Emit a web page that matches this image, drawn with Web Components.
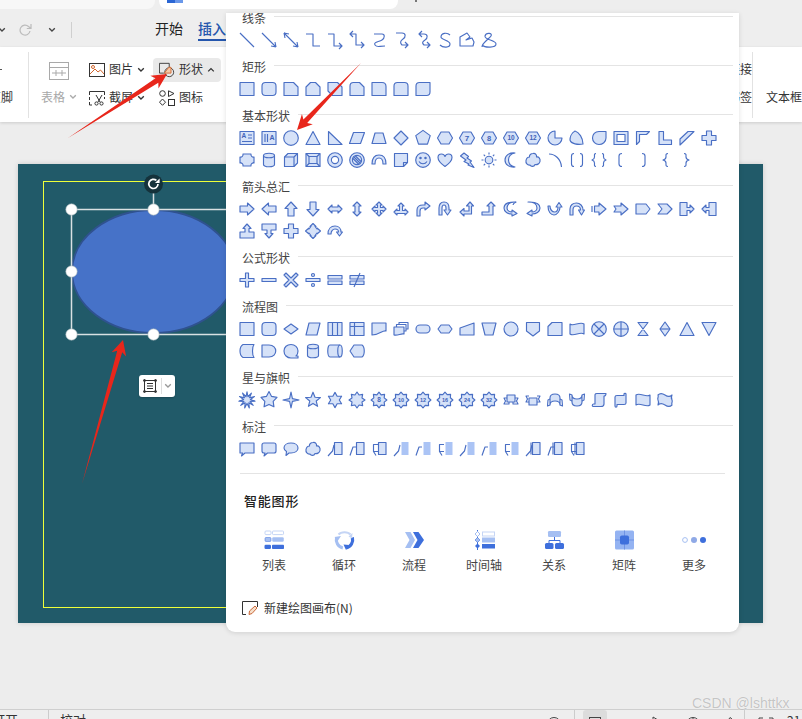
<!DOCTYPE html>
<html lang="zh"><head><meta charset="utf-8"><title>形状</title>
<style>html,body{margin:0;padding:0;background:#ededed;font-family:"Noto Sans CJK SC","Noto Sans",sans-serif;}</style>
</head><body><wps-app></wps-app>
<script>
const FONT='"Noto Sans CJK SC","Noto Sans",sans-serif';
const P=d=>`<path d="${d}"/>`, N=d=>`<path fill="none" d="${d}"/>`;
const pts=a=>a.map(p=>p[0].toFixed(2)+','+p[1].toFixed(2)).join(' ');
const poly=(n,r,rot=-90)=>`<polygon points="${pts([...Array(n)].map((_,i)=>{const t=(rot+i*360/n)*Math.PI/180;return[8+r*Math.cos(t),8+r*Math.sin(t)]}))}"/>`;
const star=(n,R,r)=>`<polygon points="${pts([...Array(2*n)].map((_,i)=>{const t=(-90+i*180/n)*Math.PI/180,q=i%2?r:R;return[8+q*Math.cos(t),8+q*Math.sin(t)]}))}"/>`;
const lab=(t,s=6.5)=>`<text x="8" y="${8+s*.36}" font-size="${s}" font-weight="700" text-anchor="middle" fill="#3f63b8" stroke="none" font-family="Liberation Sans">${t}</text>`;
const rot=(f,a)=>`<g transform="rotate(${a} 8 8)">${f}</g>`;
const flip=f=>`<g transform="translate(16 0) scale(-1 1)">${f}</g>`;
const C=(r=7)=>`<circle cx="8" cy="8" r="${r}"/>`;
const R=`<rect x="1" y="1.5" width="14" height="13"/>`;
const hex=`<polygon points="4,2 12,2 15.5,8 12,14 4,14 .5,8"/>`;
const aR=P('M1 5H8.5V2L15 8 8.5 14V11H1Z');
const cloud=P('M8 1.5C10.5 1 12 3 11.5 5 14 4.5 15.5 7 15 9.5 14.5 12 12 13 10 12.5 9 15 6 15 5 13 2.5 13.5 .5 11 1 8.5 1.5 6 3 5 4.5 5 4 3 6 1.5 8 1.5Z');
const can=P('M2.5 3.5C2.5 .5 13.5 .5 13.5 3.5V12.5C13.5 15.5 2.5 15.5 2.5 12.5Z')+N('M2.5 3.5C2.5 6.5 13.5 6.5 13.5 3.5');
const box=`<rect x="7.5" y="1.5" width="7.5" height="12"/>`;
const fbox=`<rect x="8.5" y="1" width="7" height="13" fill="#abc4f5" stroke="none"/>`;
const tl1=N('M7 4L5.5 10 1 15'),tl2=N('M7 6H4L1 14.5'),tl3=N('M7 10.5H2.5V3.5H7M2.5 10.5L5 14.5');
const SETS={
lines:[N('M1 1L15 15'),N('M1 1L15 15M15 15L10 14M15 15L14 10'),N('M1 1L15 15M15 15L10 14M15 15L14 10M1 1L6 2M1 1L2 6'),N('M1 2H8V14H15'),N('M1 2H7V14H15M12 11L15 14 12 17'),N('M1 2H7V13H15M4 -1L1 2 4 5M12 10L15 13 12 16'),N('M3 2H11C14 2 14 6 11 8S2 10 4 13 8 14 14 14'),N('M3 1H9C13 1 13 5 10 7S7 11 9 13H15M12 10L15 13 12 16'),N('M4 2H9C13 2 13 6 10 8S7 11 9 13H15M7-1L4 2 7 5M12 10L15 13 12 16'),N('M13 3C10 0 4 1 4 5 4 8 13 8 13 12 13 16 6 16 3 13'),N('M1 14V5L8 1 11 5 7 8 13 6 15 10 14 14Z'),N('M1 15C1 11 8 7 10 4 12 1 5 0 4 4 3 8 15 8 15 12 15 16 4 16 1 13')],
rects:[R,`<rect x="1" y="1.5" width="14" height="13" rx="3.5"/>`,P('M1 1.5H10.5L15 6V14.5H1Z'),P('M5.5 1.5H10.5L15 6V14.5H1V6Z'),P('M1 1.5H10.5L15 6V14.5H5.5L1 10Z'),P('M1 14.5V5Q1 1.5 4.5 1.5H10.5L15 6V14.5Z'),P('M1 1.5H11Q15 1.5 15 5.5V14.5H1Z'),P('M1 14.5V5Q1 1.5 4.5 1.5H11.5Q15 1.5 15 5V14.5Z'),P('M4.5 1.5H15V11Q15 14.5 11.5 14.5H1V5Q1 1.5 4.5 1.5Z')],
basic1:[R+`<text x="4.8" y="8.4" font-size="6.5" font-weight="700" text-anchor="middle" fill="#3f63b8" stroke="none" font-family="Liberation Sans">A</text>`+N('M9 5H13M9 8H13M3 11.5H13'),R+N('M4 4V12M6.5 4V12')+`<text x="11" y="10" font-size="7" font-weight="700" text-anchor="middle" fill="#3f63b8" stroke="none" font-family="Liberation Sans">A</text>`,C(7.3),P('M8 1.5L15 14.5H1Z'),P('M1.5 1.5L15 14.5H1.5Z'),P('M4.5 2.5H15.5L11.5 13.5H.5Z'),P('M4 3H12L15 13.5H1Z'),P('M8 1L15 8 8 15 1 8Z'),poly(5,7.6),hex,hex+lab('7',8),hex+lab('8',7.5),hex+lab('10',6.5),hex+lab('12',6.5),P('M8 8H15A7 7 0 1 1 8 1Z'),P('M6 1C2 3 1 8 1 10 2 14 9 15 14 14 14 8 10 2 6 1Z'),P('M15 1.5H8C4 1.5 1.5 4.5 1.5 8S4.5 14.5 8 14.5 15 12 15 8Z'),R+`<rect x="4" y="4.5" width="8" height="7" fill="#fff"/>`,P('M1.5 1.5H14.5L11.5 4.5H4.5V11.5L1.5 14.5Z'),P('M2 1.5H6.5V10H14.5V14.5H2Z'),P('M1 9L9 1.5H15L1 15Z'),P('M5.5 1H10.5V5.5H15V10.5H10.5V15H5.5V10.5H1V5.5H5.5Z')],
basic2:[P('M4 2H12A2.5 2.5 0 0 0 15 5V11A2.5 2.5 0 0 0 12 14H4A2.5 2.5 0 0 0 1 11V5A2.5 2.5 0 0 0 4 2Z'),can,P('M1.5 5L5 1.5H14.5V11L11 14.5H1.5Z')+N('M1.5 5H11V14.5M11 5L14.5 1.5'),R+`<rect x="4" y="4.5" width="8" height="7"/>`+N('M1 1.5L4 4.5M15 1.5L12 4.5M1 14.5L4 11.5M15 14.5L12 11.5'),C(7.3)+`<circle cx="8" cy="8" r="3.6" fill="#fff"/>`,C(7.3)+C(4.6)+N('M4.5 4.5L11.5 11.5M6 3.5L12.5 10M3.5 6L10 12.5'),P('M1 12C1 6 4 3 8 3S15 6 15 12H12C12 8 10.5 6 8 6S4 8 4 12Z'),P('M1.5 1.5H14.5V10.5L10.5 14.5H1.5Z')+N('M10.5 14.5V10.5H14.5'),C(7.3)+N('M4 9.5C6 12.5 10 12.5 12 9.5')+`<circle cx="5.5" cy="6" r=".7"/><circle cx="10.5" cy="6" r=".7"/>`,P('M8 14.5C3 11 1 8 1 5.5 1 3 3 2 4.5 2 6 2 7.5 3 8 4.5 8.5 3 10 2 11.5 2 13 2 15 3 15 5.5 15 8 13 11 8 14.5Z'),P('M5 1L1.5 4 7 8 5 9.5 10 12 9 13 15 15.5 11 10 12.5 9 8 6 9.5 4.5Z'),C(3.8)+N('M8 .5V2.5M8 13.5V15.5M.5 8H2.5M13.5 8H15.5M2.7 2.7L4.1 4.1M11.9 11.9L13.3 13.3M2.7 13.3L4.1 11.9M11.9 4.1L13.3 2.7'),P('M12 1C7 2 5.5 5 5.5 8S7 14 12 15C6 15.5 2 12.5 2 8S6 .5 12 1Z'),cloud,N('M2 2C8 2 14 7 14.5 15'),N('M5 1.5C3 1.5 2.5 2.5 2.5 4V12C2.5 13.5 3 14.5 5 14.5M11 1.5C13 1.5 13.5 2.5 13.5 4V12C13.5 13.5 13 14.5 11 14.5'),N('M5 1.5C3 1.5 3.5 3 3.5 5 3.5 7 2.5 7.5 1 8 2.5 8.5 3.5 9 3.5 11 3.5 13 3 14.5 5 14.5M11 1.5C13 1.5 12.5 3 12.5 5 12.5 7 13.5 7.5 15 8 13.5 8.5 12.5 9 12.5 11 12.5 13 13 14.5 11 14.5'),N('M9 1.5C6.5 1.5 6 2.5 6 4V12C6 13.5 6.5 14.5 9 14.5'),N('M7 1.5C9.5 1.5 10 2.5 10 4V12C10 13.5 9.5 14.5 7 14.5'),N('M11 1.5C8.5 1.5 9 3 9 5 9 7 8 7.5 6 8 8 8.5 9 9 9 11 9 13 8.5 14.5 11 14.5'),N('M5 1.5C7.5 1.5 7 3 7 5 7 7 8 7.5 10 8 8 8.5 7 9 7 11 7 13 7.5 14.5 5 14.5')],
arrows1:[aR,flip(aR),rot(aR,-90),rot(aR,90),P('M1 8L5 4V6H11V4L15 8 11 12V10H5V12Z'),rot(P('M1 8L5 4V6H11V4L15 8 11 12V10H5V12Z'),90),P('M8 1L11 4H9.5V6.5H12V5L15 8 12 11V9.5H9.5V12H11L8 15 5 12H6.5V9.5H4V11L1 8 4 5V6.5H6.5V4H5Z'),P('M8 2L11 5H9.5V9.5H12V8L15 11 12 14V12.5H4V14L1 11 4 8V9.5H6.5V5H5Z'),P('M2 15V9C2 5 5 4 8 4H10V1L15 5 10 9V7H8C6 7 5 8 5 10V15Z'),P('M2 14V7C2 3 4 1 7 1S12 3 12 7V9H14L10.5 14 7 9H9V7C9 5 8.5 4 7 4S5 5 5 7V14Z'),P('M1 11L5 7.5V10H10V5H7.5L11 1 14.5 5H12.5V13H5V15Z'),P('M1 11H8V5H6L10 1 14 5H12V14H1Z'),P('M13 1C8 1 4 3 4 7C4 10 7 11 9 11V9L14 12.5 9 15V13C5 13 1 11 1 7C1 3 5 1 11 1Z')+N('M13 1C11 2 10 3 10 4'),flip(P('M13 1C8 1 4 3 4 7C4 10 7 11 9 11V9L14 12.5 9 15V13C5 13 1 11 1 7C1 3 5 1 11 1Z')),P('M1 5C1 11 4 14 7 14S13 10 13 6H15L12 1.5 9 6H11C11 9 9.5 11 7.5 11S3 9 3 5Z'),P('M1 14V8C1 4 4 2 7.5 2S14 5 14 9H15.5L12.5 14 9.5 9H11.5C11.5 6.5 10 5 7.5 5S4 7 4 9V14Z'),N('M1 5V11')+P('M3.5 5H8V2L15 8 8 14V11H3.5Z'),P('M1 5H8V2L15 8 8 14V11H1L3 8Z'),P('M1 3H11L15 8 11 13H1Z'),P('M1 3H10L15 8 10 13H1L5 8Z'),P('M1 1.5H8V6.5H11V4L15 8 11 12V9.5H8V14.5H1Z'),flip(P('M1 1.5H8V6.5H11V4L15 8 11 12V9.5H8V14.5H1Z'))],
arrows2:[P('M1 15V9H6V5.5H4L8 1 12 5.5H10V9H15V15Z'),P('M1 1H15V7H10V10.5H12L8 15 4 10.5H6V7H1Z'),P('M5.5 1H10.5V5.5H15V10.5H10.5V15H5.5V10.5H1V5.5H5.5Z'),P('M8 .5L11 3.5H10L12 6V5L15.5 8 12 11V10L10 12.5H11L8 15.5 5 12.5H6L4 10V11L.5 8 4 5V6L6 3.5H5Z'),P('M1 11C1 6 4 3 8 3S14 6 14 9H15.5L12.5 13 9.5 9H11.5C11.5 7 10 6 8 6S4 8 4 11Z')],
eq:[P('M6.5 1H9.5V6.5H15V9.5H9.5V15H6.5V9.5H1V6.5H6.5Z'),P('M1 6.5H15V9.5H1Z'),P('M3 1L8 6 13 1 15 3 10 8 15 13 13 15 8 10 3 15 1 13 6 8 1 3Z'),P('M1 6.5H15V9.5H1Z')+`<circle cx="8" cy="3" r="1.5"/><circle cx="8" cy="13" r="1.5"/>`,P('M1 3.5H15V7H1ZM1 9H15V12.5H1Z'),P('M1 3.5H15V7H1ZM1 9H15V12.5H1Z')+N('M11 1L5 15')],
flow1:[R,`<rect x="1" y="1.5" width="14" height="13" rx="3.5"/>`,P('M1 8L8 3 15 8 8 13Z'),P('M4 2H15L12 14H1Z'),R+N('M5.5 1.5V14.5M10.5 1.5V14.5'),R+N('M1 5.5H15M5.5 1.5V14.5'),P('M1 2H15V10C11 9 9 14 1 14Z'),P('M1 6H11V13C8 12 5 15 1 14Z')+N('M3.5 6V3.5H13V10H11M6 3.5V1.5H15V8H13'),`<rect x="1" y="4" width="14" height="8" rx="4"/>`,P('M4 4H12L15 8 12 12H4L1 8Z'),P('M1 7L15 2V14H1Z'),P('M1 2H15L12 14H4Z'),C(7),P('M1.5 1.5H14.5V10L8 15 1.5 10Z'),P('M5 1.5H15V14.5H1V5.5Z'),P('M1 3C4 6 11 0 15 3V13C11 10 5 16 1 13Z'),C(7.3)+N('M3 3L13 13M13 3L3 13'),C(7.3)+N('M8 .7V15.3M.7 8H15.3'),P('M3 1.5H13L3 14.5H13Z'),P('M8 1L13 8 8 15 3 8Z')+N('M3 8H13'),P('M8 1.5L15 14.5H1Z'),P('M1 1.5H15L8 14.5Z')],
flow2:[P('M4 1.5H15C13 4 13 12 15 14.5H4C0 12 0 4 4 1.5Z'),P('M1 2H8C17 2 17 14 8 14H1Z'),P('M8 1.5C12 1.5 15 4.5 15 8 15 10 14 12 13 13H15V15H8C4 15 1 12 1 8S4 1.5 8 1.5Z'),can,P('M3 2H13C16 2 16 14 13 14H3C0 14 0 2 3 2Z')+N('M13 2C10 2 10 14 13 14'),P('M5 2H13C16 4 16 12 13 14H5L1 8Z')],
stars:[star(11,8.2,3.4),star(5,8.4,4.4),star(4,8,2),star(5,7.8,3.4),star(6,7.6,4.3),star(8,8,5.4),star(8,7.9,5.6)+lab('8',6.5),star(8,7.9,5.8)+lab('10',5.5),star(8,7.9,5.8)+lab('12',5.5),star(8,7.9,5.8)+lab('16',5.5),star(8,7.9,5.8)+lab('24',5.5),star(8,7.9,5.8)+lab('32',5.5),P('M4 3H12V10H4Z')+N('M4 6H1L2.5 9 1 12H6V10M12 6H15L13.5 9 15 12H10V10'),P('M4 6H12V13H4Z')+N('M4 4H1L2.5 7 1 10H4M12 4H15L13.5 7 15 10H12'),P('M3 13V6C3 3 5 2 8 2S13 3 13 6V13C13 10 11 9 8 9S3 10 3 13Z')+N('M3 7L1 8 .5 14 3 13M13 7L15 8 15.5 14 13 13'),P('M3 3V10C3 13 5 14 8 14S13 13 13 10V3C13 6 11 7 8 7S3 6 3 3Z')+N('M3 9L1 8 .5 2 3 3M13 9L15 8 15.5 2 13 3'),P('M4 3C4 1.5 5 1.5 6 1.5H15C15 3 14 4 13 4V12C13 14 12 14.5 10 14.5H2C1 14.5 1 12 2.5 12H4Z'),P('M2 5C2 3.5 3 3.5 4 3.5H11V2C11 1 13 1 13 2V11C13 12 12 12.5 11 12.5H4V14C4 15.5 2 15.5 2 14Z'),P('M1 3C5 0 11 6 15 3V13C11 16 5 10 1 13Z'),P('M1 3C3 1 5 1 8 3S13 5 15 3C14 5 14 6 15 8S14 11 15 13C13 15 11 15 8 13S3 11 1 13C2 11 2 10 1 8S2 5 1 3Z')],
call:[P('M1 2H15V12H6L2.5 15 3.5 12H1Z'),P('M3 2H13Q15 2 15 4V10Q15 12 13 12H6.5L3 15 4 12H3Q1 12 1 10V4Q1 2 3 2Z'),P('M8 2C12 2 15 4 15 7S12 12 8 12H6L3 14.5 3.5 10.5C2 9.5 1 8.5 1 7 1 4 4 2 8 2Z'),cloud,box+tl1,box+tl2,box+tl3,fbox+tl1,fbox+tl2,fbox+tl3,fbox+tl1,fbox+tl2,fbox+tl3,box+tl1+N('M6 1.5V13.5'),box+tl2+N('M6 1.5V13.5'),box+tl3+N('M6 1.5V13.5')]
};
const DARK='#3e6fdc',MID='#a5bff2',LITE='#c5d5f5';
const SMART={
list:`<rect x="1" y="1" width="6" height="3.6" rx="1" fill="#fff" stroke="${LITE}"/><rect x="8.5" y="1" width="11" height="3.6" rx=".8" fill="#fff" stroke="${LITE}"/><rect x="1" y="7.5" width="6" height="4" rx="1" fill="${MID}" stroke="${DARK}" stroke-width=".5"/><rect x="8.5" y="7.5" width="11" height="4" rx=".8" fill="${MID}" stroke="${MID}" stroke-width=".5"/><rect x=".5" y="14.8" width="6.5" height="4.2" rx="1.2" fill="${DARK}"/><rect x="8" y="14.8" width="12" height="4.2" rx=".8" fill="${DARK}"/>`,
cycle:`<path fill="none" stroke="${LITE}" stroke-width="2" d="M4.5 4.5C7 1.5 14 1.5 16.5 4.5"/><path fill="none" stroke="${MID}" stroke-width="3.2" d="M2.6 7.5C1.5 12 4 17 8.8 18"/><path fill="none" stroke="${DARK}" stroke-width="3.2" d="M18.4 7.5C19.5 12 17 17 12.2 18"/><path fill="${LITE}" d="M14.5 6.5L18.5 3 18 8.5Z"/><path fill="${MID}" d="M.5 7L7 6 4 10.5Z"/><path fill="${DARK}" d="M15 15L12 20 9.5 14.5Z"/>`,
flow:`<path fill="${MID}" d="M1 2H6.5L11 10 6.5 18H1L5.5 10Z"/><path fill="${DARK}" d="M9 2H14.5L20 10 14.5 18H9L13.5 10Z"/>`,
time:`<path stroke="${DARK}" fill="none" d="M3.5 0V20"/><path fill="#fff" stroke="${MID}" d="M3.5 1.5L6 4 3.5 6.5 1 4Z"/><path fill="${MID}" stroke="${DARK}" stroke-width=".6" d="M3.5 7.5L6 10 3.5 12.5 1 10Z"/><path fill="${DARK}" d="M3.5 13.5L6 16 3.5 18.5 1 16Z"/><rect x="8.5" y="2" width="12" height="4" fill="#fff" stroke="${LITE}"/><rect x="8.5" y="8" width="12" height="4" fill="${MID}" stroke="${MID}"/><rect x="8" y="14" width="13" height="4.5" fill="${DARK}"/>`,
rel:`<rect x="4" y="1" width="13" height="6" rx="1.2" fill="${MID}"/><path fill="none" stroke="${DARK}" d="M10.5 7V10.5M5 13V10.5H16V13"/><rect x="1" y="13" width="8.5" height="6" rx="1.5" fill="${DARK}"/><rect x="11" y="13" width="9" height="6" rx="1.5" fill="${DARK}"/>`,
matrix:`<rect x="1" y="0.5" width="19" height="19" rx="1.5" fill="#94b3f2"/><path fill="none" stroke="#6f93e4" d="M10.5 0.5V19.5M1 10H20"/><rect x="6" y="5.5" width="9" height="9" rx="1.8" fill="${DARK}"/>`,
more:`<circle cx="3" cy="10" r="2.4" fill="#fff" stroke="${MID}"/><circle cx="12" cy="10" r="3" fill="#8fa9e6"/><circle cx="21" cy="10" r="3" fill="${DARK}"/>`
};
const RIB={
table:`<svg width="20" height="18" viewBox="0 0 20 18" fill="none" stroke="#a9a9a9" style="margin-top:4px"><rect x=".5" y=".5" width="19" height="17"/><path d="M.5 5.5H19.5M3 11H17M7 8V14M13 8V14"/></svg>`,
pic:`<svg width="16" height="14" viewBox="0 0 16 14" fill="none" stroke="#333"><rect x=".5" y=".5" width="15" height="13"/><circle cx="4" cy="4" r="1.5" stroke="#d2662e"/><path stroke="#d2662e" d="M1 11L6 6 9 9 11.5 7 15 11"/></svg>`,
shape:`<svg width="18" height="16" viewBox="0 0 18 16" fill="none" stroke="#333"><path d="M5.5 11.5H.5V.5H11.5V5"/><circle cx="11.5" cy="10.5" r="5"/><path fill="#f3c9a8" stroke="#d2662e" d="M6 11.5L11 5H13.5V11.5Z"/></svg>`,
shot:`<svg width="16" height="15" viewBox="0 0 16 15" fill="none" stroke="#333"><path d="M.5 4V.5H15.5V4M.5 6V9M.5 11V14H3M15.5 6V8"/><path d="M7 4L11 11M13 4L9 11"/><circle cx="7.5" cy="12.5" r="1.6"/><circle cx="12.5" cy="12.5" r="1.6"/></svg>`,
icons:`<svg width="16" height="16" viewBox="0 0 16 16" fill="none" stroke="#333"><circle cx="3.5" cy="3.5" r="2.8"/><path d="M9.5 .8L15 3.5 9.5 6.5Z"/><path d="M3.5 9L6.5 12.2 3.5 15.3 .5 12.2Z"/><rect x="9.5" y="9.5" width="6" height="6"/></svg>`
};
const chev=(c='#333')=>`<svg width="8" height="6" viewBox="0 0 8 6" fill="none" stroke="${c}" stroke-width="1.3"><path d="M1.2 1.2L4 4 6.8 1.2"/></svg>`;
const chevUp=`<svg width="8" height="6" viewBox="0 0 8 6" fill="none" stroke="#333" stroke-width="1.3"><path d="M1.2 4.4L4 1.6 6.8 4.4"/></svg>`;

function def(name,html,init){customElements.define(name,class extends HTMLElement{
  constructor(){super();this.attachShadow({mode:'open'});}
  connectedCallback(){if(this._d)return;this._d=1;this.shadowRoot.innerHTML=typeof html==='function'?html(this):html;init&&init(this);}
});}

def('title-bar',`<style>:host{display:flex;height:13px;background:#eeeeee;align-items:flex-start;position:relative}
.card{width:155px;height:9px;background:#f7f7f7;border-bottom-right-radius:8px}
.tab{width:239px;height:9px;margin-left:4px;background:#fff;border-radius:0 0 8px 8px;display:flex}
.tab i{display:block;width:16px;height:3px;margin-left:8px;background:linear-gradient(90deg,#2a66d4 50%,#6a98ea 50%)}
.dot{width:2px;height:2px;margin-left:17px;background:#777}</style>
<div class="card"></div><div class="tab"><i></i></div><div class="dot"></div>`);

def('menu-bar',`<style>:host{display:flex;height:34px;background:#eeeeee;align-items:center;font:14px ${FONT};color:#222;box-sizing:border-box}
.c{display:flex;align-items:center}
.div{width:1px;height:16px;background:#cfcfcf;margin-left:15px}
.tab{line-height:31px;height:34px;position:relative}
.on{color:#2456ad;font-weight:500;margin-left:15px}
.on::after{content:"";position:absolute;left:0;right:0;bottom:6px;height:2px;background:#2456ad}
.first{margin-left:83px}</style>
<span class="c" style="margin-left:-2px">${chev('#444')}</span>
<svg style="margin-left:13px" width="14" height="14" viewBox="0 0 14 14" fill="none" stroke="#bbb" stroke-width="1.2"><path d="M12 8A5 5 0 1 1 10.5 3.5L13 5.5M13 1V5.5H8.8" transform="translate(-1 0)"/></svg>
<span class="c" style="margin-left:15px">${chev('#444')}</span>
<div class="div"></div>
<span class="tab first">开始</span><span class="tab on">插入</span>`);

def('rib-btn',h=>{const a=k=>h.getAttribute(k);return `<style>:host{display:flex;align-items:center;height:24px;box-sizing:border-box;padding:0 4px;gap:4px;white-space:nowrap;border-radius:4px;font:12px ${FONT};color:#333}
:host([active]){background:#e9e9e9;padding:0 6px;width:68px}
.i{display:flex;width:16px;height:16px;align-items:center;justify-content:center}
.t{line-height:22px;height:24px}
.c{display:flex;width:8px;justify-content:center}</style>
<span class="i">${RIB[a('icon')]||''}</span><span class="t"><slot></slot></span><span class="c">${a('caret')==='up'?chevUp:a('caret')==='down'?chev():''}</span>`});

def('rib-bar',`<style>:host{display:flex;height:75px;background:#fff;box-sizing:border-box;padding-top:5px;font:12px ${FONT};color:#333;box-shadow:0 1px 3px rgba(0,0,0,.14);position:relative;white-space:nowrap}
.g{height:66px;box-sizing:border-box;padding-top:6px}
.rows{display:flex;flex-direction:column;gap:4px}
.row{height:24px;display:flex;align-items:flex-start;line-height:22px}
.row svg{flex:none}
.clip{width:29px;border-right:1px solid #e2e2e2;box-sizing:border-box;padding-right:15px;align-items:flex-end}
.clip .row{justify-content:flex-end}
.clip i{display:block;width:2px;height:1px;background:#555;margin:11px 11px 0 0}
.tb{width:36px;margin-left:12px;align-items:center;color:#a8a8a8}
.tb .row{gap:4px}
.tb .row:last-child svg{margin-top:8px}
.c2{margin-left:8px;width:64px;margin-right:4px}
.c3{width:68px}
.link{margin-left:507px;width:50px;border-right:1px solid #e2e2e2}
.txt{margin-left:13px}</style>
<div class="g rows clip"><div class="row"><i></i></div><div class="row">页脚</div></div>
<div class="g rows tb"><div class="row">${RIB.table}</div><div class="row">表格${chev('#aaa')}</div></div>
<div class="g rows c2"><rib-btn icon="pic" caret="down">图片</rib-btn><rib-btn icon="shot" caret="down">截屏</rib-btn></div>
<div class="g rows c3"><rib-btn icon="shape" caret="up" active>形状</rib-btn><rib-btn icon="icons" style="padding-left:6px">图标</rib-btn></div>
<div class="g rows link"><div class="row" style="margin-left:-12px">超链接</div><div class="row">书签</div></div>
<div class="g rows txt"><div class="row"></div><div class="row">文本框</div></div>`);

def('slide-canvas',`<style>:host{display:block;position:relative;width:745px;height:459px;background:#215a69;box-shadow:0 0 5px rgba(0,0,0,.15)}
.art{position:absolute;left:0;top:0}
.float{position:absolute;left:121px;top:211px;width:36px;height:22px;background:#fff;border-radius:3px;display:flex;align-items:center;box-shadow:0 1px 2px rgba(0,0,0,.2)}
.float span{display:flex;margin-left:3px;padding-left:2px;border-left:1px solid #ddd;height:16px;align-items:center}</style>
<svg class="art" width="745" height="459" viewBox="0 0 745 459">
<rect x="25.5" y="17.5" width="690" height="426" fill="none" stroke="#efff3a"/>
<path stroke="#d9e1e3" stroke-width="1.5" d="M135.5 21V46"/>
<ellipse cx="135.5" cy="107.5" rx="81.5" ry="61.5" fill="#4672c8" stroke="#2f528f" stroke-width="2"/>
<rect x="53.5" y="45.5" width="165" height="125" fill="none" stroke="#d9e1e3" stroke-width="1.5"/>
<g fill="#fff" stroke="#9fb0b5" stroke-width=".6"><circle cx="53.5" cy="45.5" r="5.7"/><circle cx="135.5" cy="45.5" r="5.7"/><circle cx="53.5" cy="107.5" r="5.7"/><circle cx="53.5" cy="170.5" r="5.7"/><circle cx="135.5" cy="170.5" r="5.7"/></g>
<circle cx="135.5" cy="20" r="9.5" fill="#15323b"/>
<path fill="none" stroke="#fff" stroke-width="1.7" d="M140 20A4.6 4.6 0 1 1 138.4 16.4"/><path fill="#fff" d="M141.6 14.5V19H137Z"/>
</svg>
<div class="float"><svg style="margin-left:3px;flex:none" width="16" height="16" viewBox="0 0 16 16" fill="none" stroke="#333"><rect x="2.5" y="2.5" width="11" height="11"/><path d="M5 5.5H11M5 8H11M5 10.5H11"/><g fill="#333"><circle cx="2.5" cy="2.5" r="1"/><circle cx="13.5" cy="2.5" r="1"/><circle cx="2.5" cy="13.5" r="1"/><circle cx="13.5" cy="13.5" r="1"/></g></svg><span>${chev('#999')}</span></div>`);

def('work-space',`<style>:host{display:block;height:587px;background:#ededed;padding:42px 0 0 18px;box-sizing:border-box}</style><slide-canvas></slide-canvas>`);

def('status-bar',`<style>:host{display:flex;overflow:hidden;background:#eeeeee;border-top:1px solid #cfcfcf;font:13px ${FONT};color:#333;box-sizing:border-box;height:10px;white-space:nowrap}
.in{display:flex;align-items:flex-start;width:100%;height:22px}
.t{line-height:20px}
.sep{width:1px;height:22px;background:#ccc;flex:none}
svg{flex:none;margin-top:6px}
.on{background:#dcdcdc;width:24px;height:22px;display:flex;justify-content:center;border-radius:3px;flex:none}</style>
<div class="in"><span class="t" style="margin-left:-8px">打开</span><span class="sep" style="margin-left:30px"></span><span class="t" style="margin-left:11px">校对</span>
<svg style="margin-left:461px" width="14" height="16" fill="none" stroke="#444"><circle cx="7" cy="8" r="6.5"/></svg>
<span class="sep" style="margin-left:13px"></span>
<span class="on" style="margin-left:8px"><svg width="12" height="16" fill="none" stroke="#444"><rect x=".5" y="1.5" width="11" height="12"/><path d="M3 4.5H9"/></svg></span>
<svg style="margin-left:13px" width="14" height="16" fill="none" stroke="#444"><path d="M1 3.5H13M1 7H13"/></svg>
<svg style="margin-left:18px" width="12" height="16" fill="none" stroke="#444"><path d="M1 1V14L11 7Z"/></svg>
<svg style="margin-left:22px" width="14" height="16" fill="none" stroke="#444"><circle cx="7" cy="8" r="6.5"/><path d="M7 1.5V14M1 8H13"/></svg>
<svg style="margin-left:21px" width="12" height="16" fill="none" stroke="#444"><path d="M2 12L9 1.5 11 3 4 14Z"/></svg>
<span class="sep" style="margin-left:11px"></span>
<svg style="margin-left:13px" width="16" height="16" fill="none" stroke="#444"><path d="M1 5V2H5M11 2H15V5M4 5H12V12H4Z"/></svg>
<span class="t" style="margin-left:13px;font-size:12px">21</span></div>`);

def('shape-section',h=>{const sets=h.getAttribute('sets').split(' ');
 const cell=s=>`<svg width="16" height="16" viewBox="0 0 16 16" fill="#d6e2f8" stroke="#4a6fc4" stroke-width="1.15" stroke-linejoin="round" overflow="visible">${s}</svg>`;
 return `<style>:host{display:block;margin-bottom:5px}
 .h{display:flex;align-items:flex-start;height:18px;gap:8px;padding-left:16px;padding-right:6px;font:12px/21px ${FONT};color:#444}
 .h i{flex:1;height:1px;background:#e4e4e4;margin-top:9px}
 .row{display:grid;grid-template-columns:repeat(22,22px);grid-auto-rows:22px;padding-left:10px;margin-top:4px}
 .row+.row{margin-top:0}
 .row span{display:flex;align-items:center;justify-content:center}</style>
 <div class="h">${h.getAttribute('label')}<i></i></div>
 ${sets.map(s=>`<div class="row">${SETS[s].map(x=>`<span>${cell(x)}</span>`).join('')}</div>`).join('')}`});

def('smart-item',h=>`<style>:host{display:flex;flex-direction:column;align-items:center;width:70px;font:12px/16px ${FONT};color:#444}
svg{display:block;overflow:visible}div{height:20px;margin-bottom:7px}</style>
<div><svg width="${h.getAttribute('icon')==='more'?24:21}" height="20" viewBox="0 0 ${h.getAttribute('icon')==='more'?24:21} 20">${SMART[h.getAttribute('icon')]}</svg></div><slot></slot>`);

def('shape-panel',`<style>:host{display:block;position:absolute;left:226px;top:13px;width:513px;height:619px;background:#fff;border-radius:0 0 9px 9px;box-shadow:0 1px 5px rgba(0,0,0,.12);overflow:hidden}
.in{margin-top:-6px}
.rule{height:1px;background:#e4e4e4;margin:13px 14px 0 14px}
h3{margin:19px 0 0 18px;font:500 13px/16px ${FONT};color:#222;letter-spacing:.8px;height:16px}
.smart{display:flex;margin:21px 0 0 13px}
.new{display:flex;align-items:center;gap:6px;margin:27px 0 0 16px;font:12px/16px ${FONT};color:#333}</style>
<div class="in">
<shape-section label="线条" sets="lines"></shape-section>
<shape-section label="矩形" sets="rects"></shape-section>
<shape-section label="基本形状" sets="basic1 basic2"></shape-section>
<shape-section label="箭头总汇" sets="arrows1 arrows2"></shape-section>
<shape-section label="公式形状" sets="eq"></shape-section>
<shape-section label="流程图" sets="flow1 flow2"></shape-section>
<shape-section label="星与旗帜" sets="stars"></shape-section>
<shape-section label="标注" sets="call"></shape-section>
<div class="rule"></div>
<h3>智能图形</h3>
<div class="smart">
<smart-item icon="list">列表</smart-item><smart-item icon="cycle">循环</smart-item><smart-item icon="flow">流程</smart-item><smart-item icon="time">时间轴</smart-item><smart-item icon="rel">关系</smart-item><smart-item icon="matrix">矩阵</smart-item><smart-item icon="more">更多</smart-item>
</div>
<div class="new"><svg width="16" height="14" viewBox="0 0 16 14" fill="none" stroke="#333"><path d="M4 13.5H.5V.5H15.5V6"/><path fill="#f6dfca" stroke="#c9683a" d="M7 13.5L7.5 10 13 5 15 7 10 12.5Z"/></svg>新建绘图画布(N)</div>
</div>`);

function arrow(x1,y1,x2,y2){const L=Math.hypot(x2-x1,y2-y1),u=[(x2-x1)/L,(y2-y1)/L],n=[-u[1],u[0]];
 const at=(b,w)=>[x2-u[0]*b+n[0]*w,y2-u[1]*b+n[1]*w];
 return `<polygon points="${pts([[x1,y1],at(12,2.6),at(15,7.5),[x2,y2],at(15,-7.5),at(12,-2.6)])}"/>`;}
def('red-arrows',`<style>:host{display:block;position:absolute;left:0;top:0;width:802px;height:719px;pointer-events:none}svg{display:block}</style>
<svg width="802" height="719" fill="#e8261b">${arrow(68,138,167,74)}${arrow(361,63,297,130)}${arrow(82,484,123,340)}</svg>`);

def('wps-app',`<style>:host{display:block;position:relative;width:802px;height:719px;overflow:hidden;background:#ededed}
.wm{position:absolute;left:692px;top:694px;font:14px/18px "Liberation Sans",sans-serif;color:rgba(150,150,150,.55);text-shadow:0 0 1px #fff;white-space:nowrap}</style>
<title-bar></title-bar><menu-bar></menu-bar><rib-bar></rib-bar><work-space></work-space><status-bar></status-bar>
<shape-panel></shape-panel><red-arrows></red-arrows><div class="wm">CSDN @lshttkx</div>`);
</script></body></html>
